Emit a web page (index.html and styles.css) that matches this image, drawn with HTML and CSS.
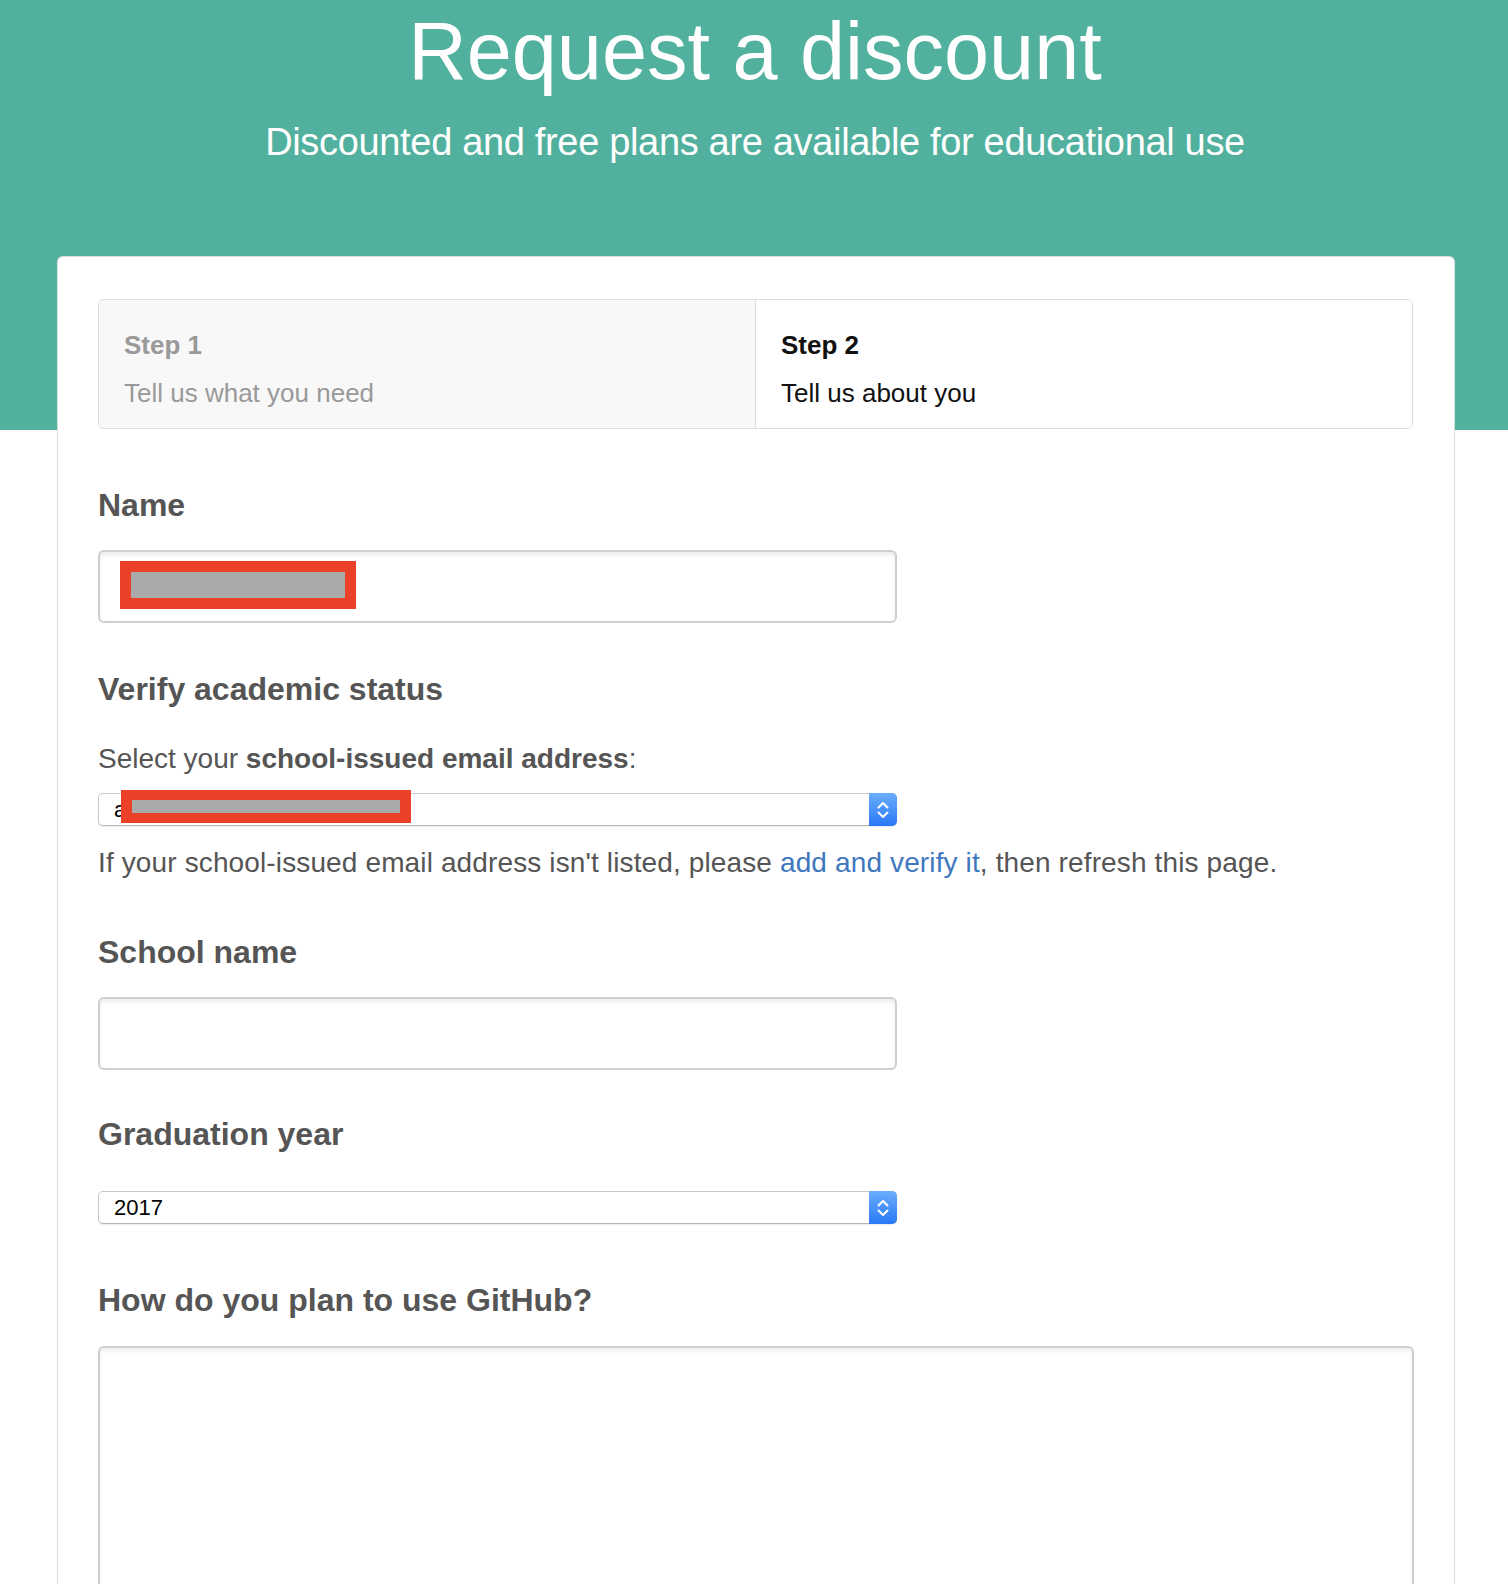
FILE: index.html
```html
<!DOCTYPE html>
<html lang="en">
<head>
<meta charset="utf-8">
<title>Request a discount</title>
<link rel="stylesheet" href="styles.css">
</head>
<body>
<header class="hero">
  <h1 class="hero-title">Request a discount</h1>
  <p class="hero-sub">Discounted and free plans are available for educational use</p>
</header>
<main class="card">
  <div class="steps">
    <div class="step step-done">
      <div class="step-num">Step 1</div>
      <div class="step-desc">Tell us what you need</div>
    </div>
    <div class="step step-current">
      <div class="step-num">Step 2</div>
      <div class="step-desc">Tell us about you</div>
    </div>
  </div>
  <form class="form">
    <h3 class="label label-first">Name</h3>
    <div class="field field-input">
      <input class="input" type="text" aria-label="Name">
      <span class="redact redact-name"><span class="redact-bar"></span></span>
    </div>

    <h3 class="label label-verify">Verify academic status</h3>
    <p class="text text-select">Select your <strong>school-issued email address</strong>:</p>
    <div class="select select-email">
      <span class="select-value">a</span>
      <span class="select-btn"><svg width="14" height="24" viewBox="0 0 14 24"><path d="M2.5 9.5 L7 5 L11.5 9.5 M2.5 14.5 L7 19 L11.5 14.5" fill="none" stroke="#fff" stroke-width="2" stroke-linecap="round" stroke-linejoin="round"/></svg></span>
      <span class="redact redact-email"><span class="redact-bar"></span></span>
    </div>
    <p class="text text-help">If your school-issued email address isn't listed, please <a href="#" class="link">add and verify it</a>, then refresh this page.</p>

    <h3 class="label label-school">School name</h3>
    <div class="field field-input">
      <input class="input" type="text" aria-label="School name">
    </div>

    <h3 class="label label-grad">Graduation year</h3>
    <div class="select select-year">
      <span class="select-value">2017</span>
      <span class="select-btn"><svg width="14" height="24" viewBox="0 0 14 24"><path d="M2.5 9.5 L7 5 L11.5 9.5 M2.5 14.5 L7 19 L11.5 14.5" fill="none" stroke="#fff" stroke-width="2" stroke-linecap="round" stroke-linejoin="round"/></svg></span>
    </div>

    <h3 class="label label-plan">How do you plan to use GitHub?</h3>
    <textarea class="textarea" aria-label="How do you plan to use GitHub?"></textarea>
  </form>
</main>
</body>
</html>
```

FILE: styles.css
```css
html, body {
  margin: 0;
  padding: 0;
}
body {
  font-family: "Liberation Sans", Arial, sans-serif;
  background: linear-gradient(#52b19e 0, #52b19e 430px, #ffffff 430px);
  color: #555;
  min-height: 1584px;
}
.hero {
  padding-top: 11px;
  padding-bottom: 94px;
  text-align: center;
  color: #fff;
}
.hero-title {
  margin: 0;
  font-size: 81px;
  line-height: 80px;
  font-weight: normal;
  padding-left: 2px;
}
.hero-sub {
  margin: 31px 0 0;
  font-size: 38px;
  line-height: 40px;
  font-weight: normal;
  letter-spacing: -0.33px;
  padding-left: 2px;
}
.card {
  display: block;
  box-sizing: border-box;
  width: 1398px;
  margin-left: 57px;
  min-height: 1400px;
  background: #fff;
  border: 1px solid #dcdcdc;
  border-bottom: none;
  border-radius: 6px 6px 0 0;
  padding: 42px 41px 0 40px;
}
.steps {
  display: flex;
  border: 1px solid #dcdcdc;
  border-radius: 6px;
  overflow: hidden;
}
.step {
  flex: 1;
  padding: 25px 24px 15px 25px;
}
.step-done {
  background: #f8f8f8;
  color: #999;
  border-right: 1px solid #dcdcdc;
}
.step-current {
  background: #fff;
  color: #111;
}
.step-num {
  font-size: 26px;
  line-height: 40px;
  font-weight: bold;
}
.step-desc {
  margin-top: 8px;
  font-size: 26px;
  line-height: 40px;
}
.form {
  display: flex;
  flex-direction: column;
  align-items: flex-start;
}
.label {
  margin: 0;
  font-size: 32px;
  line-height: 40px;
  font-weight: bold;
  color: #555;
}
.label-first { margin-top: 56px; }
.label-verify { margin-top: 46px; }
.label-school { margin-top: 49px; }
.label-grad { margin-top: 44px; }
.label-plan { margin-top: 56px; }
.text {
  margin: 0;
  font-size: 28px;
  line-height: 40px;
  color: #555;
}
.text strong { font-weight: bold; }
.text-select { margin-top: 30px; }
.text-help { margin-top: 17px; letter-spacing: 0.13px; }
.link {
  color: #4078c0;
  text-decoration: none;
}
.field {
  position: relative;
  margin-top: 25px;
  width: 799px;
}
.input {
  display: block;
  box-sizing: border-box;
  width: 799px;
  height: 73px;
  margin: 0;
  border: 2px solid #cfcfcf;
  border-radius: 6px;
  background: #fff;
  box-shadow: inset 0 3px 4px rgba(0, 0, 0, 0.07);
  font: inherit;
}
.redact {
  position: absolute;
  display: block;
  box-sizing: border-box;
  background: #ea4128;
}
.redact-bar {
  display: block;
  height: 100%;
  background: #aaaaaa;
}
.redact-name {
  left: 22px;
  top: 11px;
  width: 236px;
  height: 48px;
  padding: 11px;
}
.select {
  position: relative;
  display: flex;
  align-items: stretch;
  box-sizing: border-box;
  width: 799px;
  height: 33px;
  border: 1px solid #c8c8c8;
  border-bottom-color: #b5b5b5;
  border-radius: 5px;
  background: #fff;
  box-shadow: 0 1px 1px rgba(0, 0, 0, 0.08);
}
.select-email { margin-top: 14px; }
.select-year { margin-top: 37px; }
.select-value {
  flex: 1;
  padding-left: 15px;
  font-size: 22px;
  line-height: 31px;
  color: #000;
}
.select-btn {
  display: flex;
  align-items: center;
  justify-content: center;
  width: 28px;
  margin: -1px -1px -1px 0;
  border-radius: 0 5px 5px 0;
  background: linear-gradient(#6aaefc, #2a78f6);
}
.redact-email {
  left: 22px;
  top: -4px;
  width: 290px;
  height: 33px;
  padding: 10px 11px;
}
.textarea {
  display: block;
  box-sizing: border-box;
  margin-top: 26px;
  width: 1316px;
  height: 320px;
  border: 2px solid #cfcfcf;
  border-radius: 6px;
  background: #fff;
  box-shadow: inset 0 3px 4px rgba(0, 0, 0, 0.07);
  resize: none;
  font: inherit;
}
```
